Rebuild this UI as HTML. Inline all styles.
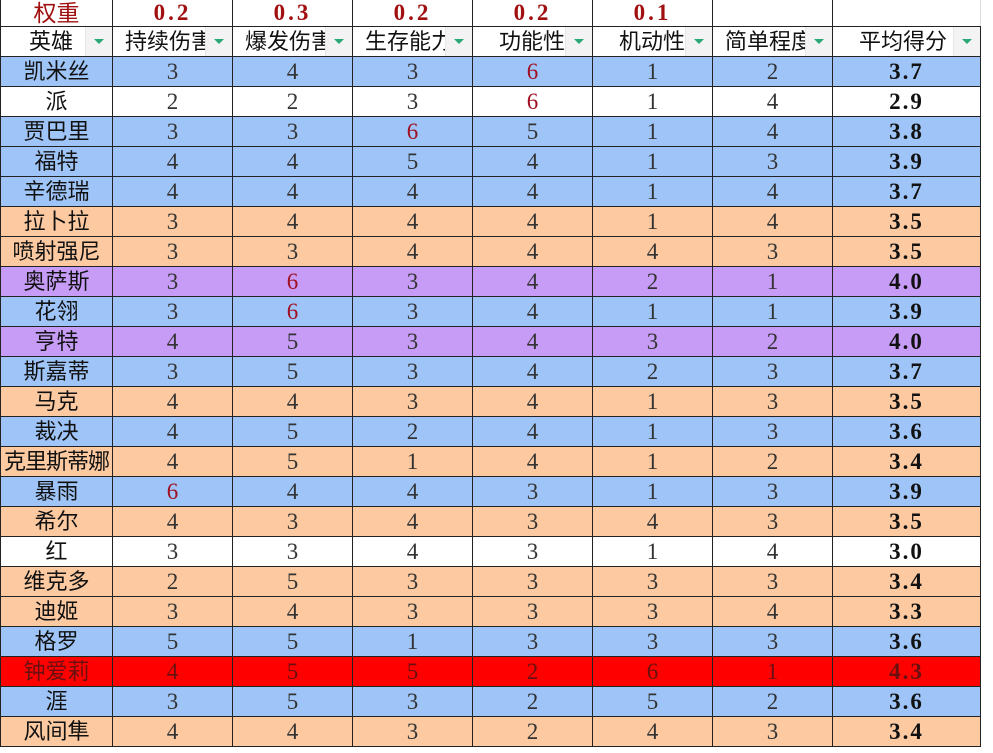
<!DOCTYPE html>
<html><head><meta charset="utf-8"><style>
body{margin:0;background:#fff;width:993px;height:753px;overflow:hidden}
table{border-collapse:collapse;table-layout:fixed;position:absolute;left:0;top:0}
td{border:1px solid #222;padding:0;text-align:center;font-family:"Liberation Serif","Noto Serif CJK SC",serif;font-size:23px;color:#333;height:29px;line-height:29px;overflow:hidden;white-space:nowrap}
td.n{font-family:"Liberation Sans","Noto Sans CJK SC",sans-serif;font-size:22px;color:#111}
td.a{font-weight:bold;color:#111;letter-spacing:2px;font-size:23px}
tr.w td{border-top:none;color:#a01010;font-weight:bold;height:26px;line-height:26px;letter-spacing:3px;font-size:23px}
tr.w td.n{font-weight:normal;letter-spacing:0}
tr.h td{font-family:"Liberation Sans","Noto Sans CJK SC",sans-serif;font-size:22px;color:#111;position:relative;text-align:left;padding-left:12px;text-overflow:clip}
tr.h td span.f{position:absolute;right:0;top:0;width:26px;height:29px;background:#f3f3f3;border-left:1px solid #e6e6e6}
tr.h td span.f:after{content:"";position:absolute;left:8px;top:12px;border-left:5px solid transparent;border-right:5px solid transparent;border-top:5px solid #2aa876}
.b td{background:#9fc5f8}.o td{background:#fcc9a0}.p td{background:#c79cf7}.r td{background:#fe0000;color:#6a1010}
.x{color:#a01020}
</style></head><body>
<table>
<colgroup><col style="width:112px"><col style="width:120px"><col style="width:120px"><col style="width:120px"><col style="width:120px"><col style="width:120px"><col style="width:120px"><col style="width:148px"></colgroup>
<tr class="w"><td class="n" style="color:#a01010">权重</td><td>0.2</td><td>0.3</td><td>0.2</td><td>0.2</td><td>0.1</td><td></td><td style="border-right-color:#ddd"></td></tr>
<tr class="h"><td style="padding-left:28px">英雄<span class="f"></span></td><td>持续伤害<span class="f"></span></td><td>爆发伤害<span class="f"></span></td><td>生存能力<span class="f"></span></td><td style="padding-left:26px">功能性<span class="f"></span></td><td style="padding-left:26px">机动性<span class="f"></span></td><td>简单程度<span class="f"></span></td><td style="padding-left:26px">平均得分<span class="f"></span></td></tr>
<tr class="b"><td class="n">凯米丝</td><td>3</td><td>4</td><td>3</td><td class="x">6</td><td>1</td><td>2</td><td class="a">3.7</td></tr>
<tr><td class="n">派</td><td>2</td><td>2</td><td>3</td><td class="x">6</td><td>1</td><td>4</td><td class="a">2.9</td></tr>
<tr class="b"><td class="n">贾巴里</td><td>3</td><td>3</td><td class="x">6</td><td>5</td><td>1</td><td>4</td><td class="a">3.8</td></tr>
<tr class="b"><td class="n">福特</td><td>4</td><td>4</td><td>5</td><td>4</td><td>1</td><td>3</td><td class="a">3.9</td></tr>
<tr class="b"><td class="n">辛德瑞</td><td>4</td><td>4</td><td>4</td><td>4</td><td>1</td><td>4</td><td class="a">3.7</td></tr>
<tr class="o"><td class="n">拉卜拉</td><td>3</td><td>4</td><td>4</td><td>4</td><td>1</td><td>4</td><td class="a">3.5</td></tr>
<tr class="o"><td class="n">喷射强尼</td><td>3</td><td>3</td><td>4</td><td>4</td><td>4</td><td>3</td><td class="a">3.5</td></tr>
<tr class="p"><td class="n">奥萨斯</td><td>3</td><td class="x">6</td><td>3</td><td>4</td><td>2</td><td>1</td><td class="a">4.0</td></tr>
<tr class="b"><td class="n">花翎</td><td>3</td><td class="x">6</td><td>3</td><td>4</td><td>1</td><td>1</td><td class="a">3.9</td></tr>
<tr class="p"><td class="n">亨特</td><td>4</td><td>5</td><td>3</td><td>4</td><td>3</td><td>2</td><td class="a">4.0</td></tr>
<tr class="b"><td class="n">斯嘉蒂</td><td>3</td><td>5</td><td>3</td><td>4</td><td>2</td><td>3</td><td class="a">3.7</td></tr>
<tr class="o"><td class="n">马克</td><td>4</td><td>4</td><td>3</td><td>4</td><td>1</td><td>3</td><td class="a">3.5</td></tr>
<tr class="b"><td class="n">裁决</td><td>4</td><td>5</td><td>2</td><td>4</td><td>1</td><td>3</td><td class="a">3.6</td></tr>
<tr class="o"><td class="n" style="letter-spacing:-1px">克里斯蒂娜</td><td>4</td><td>5</td><td>1</td><td>4</td><td>1</td><td>2</td><td class="a">3.4</td></tr>
<tr class="b"><td class="n">暴雨</td><td class="x">6</td><td>4</td><td>4</td><td>3</td><td>1</td><td>3</td><td class="a">3.9</td></tr>
<tr class="o"><td class="n">希尔</td><td>4</td><td>3</td><td>4</td><td>3</td><td>4</td><td>3</td><td class="a">3.5</td></tr>
<tr><td class="n">红</td><td>3</td><td>3</td><td>4</td><td>3</td><td>1</td><td>4</td><td class="a">3.0</td></tr>
<tr class="o"><td class="n">维克多</td><td>2</td><td>5</td><td>3</td><td>3</td><td>3</td><td>3</td><td class="a">3.4</td></tr>
<tr class="o"><td class="n">迪姬</td><td>3</td><td>4</td><td>3</td><td>3</td><td>3</td><td>4</td><td class="a">3.3</td></tr>
<tr class="b"><td class="n">格罗</td><td>5</td><td>5</td><td>1</td><td>3</td><td>3</td><td>3</td><td class="a">3.6</td></tr>
<tr class="r"><td class="n" style="color:#6a1010">钟爱莉</td><td>4</td><td>5</td><td>5</td><td>2</td><td>6</td><td>1</td><td class="a" style="color:#6a1010">4.3</td></tr>
<tr class="b"><td class="n">涯</td><td>3</td><td>5</td><td>3</td><td>2</td><td>5</td><td>2</td><td class="a">3.6</td></tr>
<tr class="o"><td class="n">风间隼</td><td>4</td><td>4</td><td>3</td><td>2</td><td>4</td><td>3</td><td class="a">3.4</td></tr>
</table>
</body></html>
